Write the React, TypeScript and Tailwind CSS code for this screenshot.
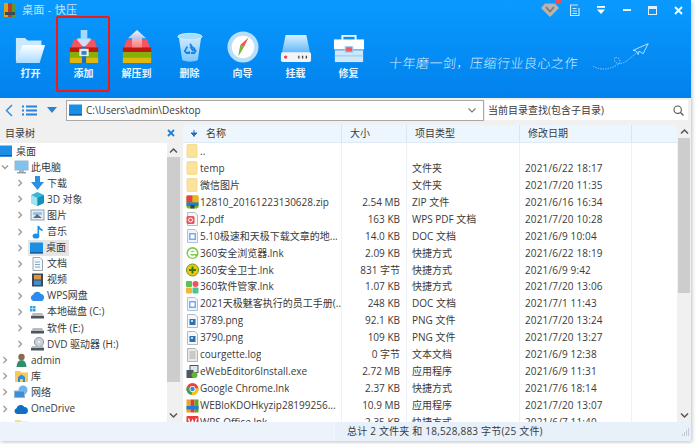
import React from "react";

const F = { fontFamily: '"Open Sans","Noto Sans CJK SC",sans-serif' };

function Archive({ up }: { up?: boolean }) {
  return (
    <svg width="30" height="33" viewBox="0 0 36 36" preserveAspectRatio="none">
      <defs>
        <linearGradient id={up ? "au" : "ad"} x1="0" y1="0" x2="0" y2="1">
          <stop offset="0" stopColor="#ffffff" stopOpacity="0.95" />
          <stop offset="1" stopColor="#ffb0b0" stopOpacity="0.5" />
        </linearGradient>
      </defs>
      <path d="M1 22 L6 10 H30 L35 22 Z" fill="#f4555f" />
      <rect x="1" y="19" width="34" height="5" fill="#c0170f" />
      <rect x="1" y="24" width="34" height="6" fill="#84b00c" />
      <rect x="1" y="30" width="34" height="6" fill="#e2b70b" />
      {up ? (
        <path d="M18 0 L29 9 H24 V19 H12 V9 H7 Z" fill={`url(#au)`} />
      ) : (
        <>
          <path d="M9 10 L18 20 L27 10 Z" fill="#f7f1f1" opacity="0.75" />
          <path d="M14 0 H22 V9 H26 L18 18 L10 9 H14 Z" fill="#bfe6ff" opacity="0.85" />
          <rect x="15.5" y="18" width="5" height="18" fill="#1d6cc4" />
          <rect x="13" y="21" width="10" height="7" fill="#d8edf5" stroke="#f4f4f4" />
          <rect x="15" y="23" width="6" height="4" fill="#3b7fb8" />
        </>
      )}
    </svg>
  );
}

function FolderOpen() {
  return (
    <svg width="31" height="26" viewBox="0 0 34 29" preserveAspectRatio="none">
      <defs>
        <linearGradient id="fo" x1="0" y1="0" x2="0" y2="1">
          <stop offset="0" stopColor="#ffffff" />
          <stop offset="1" stopColor="#a9dcff" />
        </linearGradient>
      </defs>
      <path d="M1 1 H11 L14 4 H29 V11 H9 L3 27 H1 Z" fill="#c8e9ff" />
      <path d="M8 9 H33 L27 29 H1 Z" fill="url(#fo)" />
    </svg>
  );
}

function Trash() {
  return (
    <svg width="26" height="31" viewBox="0 0 30 34" preserveAspectRatio="none">
      <defs>
        <linearGradient id="tr" x1="0" y1="0" x2="0" y2="1">
          <stop offset="0" stopColor="#cfeaff" />
          <stop offset="1" stopColor="#7cc8ff" />
        </linearGradient>
      </defs>
      <path d="M2 5 L6 31 Q15 34 24 31 L28 5 Z" fill="url(#tr)" />
      <ellipse cx="15" cy="5" rx="14" ry="3.5" fill="#a8dcff" stroke="#d4eeff" />
      <path d="M15 13 l3 4 h-2 l2 3 h3 l-2-3 M12 16 l-3 5 l2 2 h3 v-2 M16 23 h4 l2-3" fill="none" stroke="#1c82e0" strokeWidth="2" />
    </svg>
  );
}

function Compass() {
  return (
    <svg width="32" height="32" viewBox="0 0 34 34">
      <circle cx="17" cy="17" r="16.5" fill="#b7defa" />
      <circle cx="17" cy="17" r="12" fill="#ffffff" />
      <path d="M23 7 L18 17 L14 15 Z" fill="#f0555a" />
      <path d="M12 27 L14 15 L18 17 Z" fill="#7eb23a" />
    </svg>
  );
}

function Disk() {
  return (
    <svg width="32" height="29" viewBox="0 0 34 32" preserveAspectRatio="none">
      <defs>
        <linearGradient id="dk" x1="0" y1="0" x2="0" y2="1">
          <stop offset="0" stopColor="#d8f0ff" />
          <stop offset="1" stopColor="#60b8f8" />
        </linearGradient>
      </defs>
      <path d="M6 1 H28 L32 21 H2 Z" fill="url(#dk)" />
      <rect x="1" y="20" width="32" height="11" rx="2" fill="#f4f4f4" />
      <circle cx="6" cy="25.5" r="1.8" fill="#ef4050" />
      <path d="M20 24 v3 M24 24 v3 M28 24 v3" stroke="#444" strokeWidth="1.4" />
    </svg>
  );
}

function Toolbox() {
  return (
    <svg width="32" height="29" viewBox="0 0 34 32" preserveAspectRatio="none">
      <path d="M10 7 V2 H24 V7" fill="none" stroke="#fff" strokeWidth="2" />
      <path d="M1 6 H33 V17 H1 Z" fill="#ffffff" />
      <path d="M2 18 H32 V31 H2 Z" fill="#cfe8fa" />
      <rect x="2" y="23" width="30" height="2" fill="#a8d6f5" />
      <rect x="13" y="14" width="8" height="6" fill="#ef5a64" stroke="#9bd1f7" strokeWidth="1.2" />
    </svg>
  );
}

function Monitor({ w = 14, color = "#1b8fe6" }: { w?: number; color?: string }) {
  return (
    <svg width={w} height="12" viewBox="0 0 14 12" preserveAspectRatio="none" className="shrink-0">
      <rect x="0" y="0.5" width="14" height="11" fill={color} />
      <rect x="0" y="10" width="14" height="1.5" fill="#0d5fa8" />
    </svg>
  );
}

function Chevron({ open, hide }: { open?: boolean; hide?: boolean }) {
  return (
    <svg width="8" height="8" viewBox="0 0 8 8" className={hide ? "shrink-0 opacity-0" : "shrink-0"}>
      <path d={open ? "M1 2.5 L4 5.5 L7 2.5" : "M2.5 1 L5.5 4 L2.5 7"} fill="none" stroke="#999999" strokeWidth="1.3" />
    </svg>
  );
}

function TreeIcon({ k }: { k: string }) {
  const s = { width: 15, height: 14, viewBox: "0 0 15 14", className: "shrink-0" };
  switch (k) {
    case "pc":
      return (
        <svg {...s}>
          <rect x="1" y="1" width="13" height="9" fill="#7fc3ee" stroke="#9fb5c6" />
          <rect x="5" y="10" width="5" height="2" fill="#a9bac6" />
          <rect x="3" y="12" width="9" height="1.4" fill="#8b9daa" />
        </svg>
      );
    case "down":
      return (
        <svg {...s}>
          <path d="M5 0 H10 V6 H14 L7.5 14 L1 6 H5 Z" fill="#2f8fe2" />
        </svg>
      );
    case "3d":
      return (
        <svg {...s}>
          <path d="M7.5 0 L14 3 V11 L7.5 14 L1 11 V3 Z" fill="#35b7d8" />
          <path d="M1 3 L7.5 6 V14 L1 11 Z" fill="#9fe4f0" />
          <path d="M14 3 L7.5 6 V14 L14 11 Z" fill="#1590bd" />
        </svg>
      );
    case "pic":
      return (
        <svg {...s}>
          <rect x="1" y="2" width="13" height="10" fill="#e8eef4" stroke="#8ea0ae" />
          <rect x="3" y="4" width="9" height="3" fill="#9cc4e6" />
          <path d="M3 10 L7 6 L12 10 Z" fill="#5f6f7c" />
        </svg>
      );
    case "music":
      return (
        <svg {...s}>
          <ellipse cx="6" cy="11" rx="3.4" ry="2.6" fill="#1e8fe6" />
          <path d="M8.3 11 V1 Q9 4 12.5 5.5" fill="none" stroke="#1e8fe6" strokeWidth="1.6" />
        </svg>
      );
    case "desk":
      return <Monitor w={13} />;
    case "doc":
      return (
        <svg {...s}>
          <path d="M3 0.5 H10 L12.5 3 V13.5 H3 Z" fill="#f6f6f6" stroke="#9aa5ad" />
          <path d="M5 5 H10 M5 7.5 H10 M5 10 H10" stroke="#6ea9d8" />
        </svg>
      );
    case "video":
      return (
        <svg {...s}>
          <rect x="2" y="0.5" width="11" height="13" fill="#3d4a55" />
          <rect x="4" y="2" width="7" height="4.5" fill="#e0953a" />
          <rect x="4" y="7.5" width="7" height="4.5" fill="#3f8fd0" />
        </svg>
      );
    case "cloud":
      return (
        <svg {...s}>
          <path d="M3.5 12 A3.2 3.2 0 0 1 3 5.8 A4.4 4.4 0 0 1 11 5 A3.6 3.6 0 0 1 11.5 12 Z" fill="#2b8cf0" />
        </svg>
      );
    case "c":
      return (
        <svg {...s}>
          <rect x="0" y="1" width="2.5" height="2.5" fill="#2aa5ee" />
          <rect x="3" y="1" width="2.5" height="2.5" fill="#2aa5ee" />
          <rect x="0" y="4" width="2.5" height="2.5" fill="#2aa5ee" />
          <rect x="3" y="4" width="2.5" height="2.5" fill="#2aa5ee" />
          <path d="M3 8 H12 L14 11 H1 Z" fill="#b5bdc3" />
          <rect x="1" y="11" width="13" height="2.5" fill="#4d555a" />
        </svg>
      );
    case "e":
      return (
        <svg {...s}>
          <path d="M3 7 H12 L14 10 H1 Z" fill="#b5bdc3" />
          <rect x="1" y="10" width="13" height="2.5" fill="#4d555a" />
        </svg>
      );
    case "dvd":
      return (
        <svg {...s}>
          <circle cx="9" cy="5" r="4.6" fill="#c9cfd4" stroke="#8f989f" />
          <circle cx="9" cy="5" r="1.3" fill="#eee" />
          <path d="M2 9 H13 L14 11 H1 Z" fill="#b5bdc3" />
          <rect x="1" y="11" width="13" height="2.5" fill="#4d555a" />
        </svg>
      );
    case "user":
      return (
        <svg {...s}>
          <circle cx="7.5" cy="4" r="3.2" fill="#8a6a4e" />
          <path d="M2.5 14 Q3 7 7.5 7 Q12 7 12.5 14 Z" fill="#2f8f6a" />
        </svg>
      );
    case "lib":
      return (
        <svg {...s}>
          <path d="M1 2 H6 L7.5 3.5 H14 V13 H1 Z" fill="#f6c95a" />
          <path d="M4 13 V8 L7.5 5.5 L11 8 V13 H9 V10 H6 V13 Z" fill="#2b8fe0" />
        </svg>
      );
    case "net":
      return (
        <svg {...s}>
          <circle cx="9" cy="5" r="4.5" fill="#6fb4e8" />
          <rect x="0.5" y="6" width="10" height="6.5" fill="#3c8fd6" stroke="#8db5d4" />
        </svg>
      );
    case "od":
      return (
        <svg {...s}>
          <path d="M3 12 A3 3 0 0 1 2.5 6.2 A4.4 4.4 0 0 1 10.5 5 A3.6 3.6 0 0 1 11.5 12 Z" fill="#0f6fc6" />
        </svg>
      );
    default:
      return (
        <svg {...s}>
          <path d="M1 2 H6 L7.5 3.5 H14 V13 H1 Z" fill="#f8dc8c" />
        </svg>
      );
  }
}

function FileIcon({ k }: { k: string }) {
  const s = { width: 13, height: 14, viewBox: "0 0 13 14", className: "shrink-0" };
  const Page = (
    <path d="M1.5 0.5 H9 L11.5 3 V13.5 H1.5 Z" fill="#f5f6f7" stroke="#b3bac0" />
  );
  switch (k) {
    case "folder":
      return (
        <svg {...s}>
          <rect x="1" y="0.5" width="10" height="13" rx="1" fill="#fbe39c" stroke="#efd27c" strokeWidth="0.7" />
        </svg>
      );
    case "zip":
      return (
        <svg {...s}>
          <rect x="0.5" y="0.5" width="12" height="13" rx="2" fill="#7ab51d" />
          <rect x="0.5" y="0.5" width="6" height="7" fill="#e64040" />
          <rect x="6.5" y="0.5" width="6" height="7" fill="#f0b020" />
          <rect x="0.5" y="7.5" width="12" height="3.5" fill="#1f7fd8" />
          <rect x="4.5" y="10" width="4" height="3.5" fill="#39424a" />
        </svg>
      );
    case "pdf":
      return (
        <svg {...s}>
          {Page}
          <rect x="0.5" y="4" width="8" height="8" rx="1.5" fill="#e8545f" />
          <circle cx="4.5" cy="8" r="2" fill="none" stroke="#fff" />
        </svg>
      );
    case "doc":
      return (
        <svg {...s}>
          <path d="M1.5 0.5 H9 L11.5 3 V13.5 H1.5 Z" fill="#eef4fc" stroke="#a9c3e8" />
          <rect x="3" y="4" width="7" height="7" fill="#7fa9e8" />
          <rect x="4.5" y="5.5" width="4" height="4" fill="#fff" />
        </svg>
      );
    case "ie":
      return (
        <svg {...s}>
          <circle cx="6.5" cy="7" r="6" fill="#7ecb4a" />
          <path d="M3.5 7 H10 A3.5 3.5 0 1 0 9 9.8" fill="none" stroke="#fff" strokeWidth="2" />
        </svg>
      );
    case "guard":
      return (
        <svg {...s}>
          <circle cx="6.5" cy="7" r="6" fill="#f5c60f" stroke="#5a9a1e" />
          <path d="M3 7 H10 M6.5 3.5 V10.5" stroke="#2c7d1a" strokeWidth="2" />
        </svg>
      );
    case "mgr":
      return (
        <svg {...s}>
          <rect x="0" y="1" width="6" height="6" rx="1" fill="#5cc24c" />
          <rect x="6.5" y="1" width="6" height="6" rx="3" fill="#e8545f" />
          <rect x="0" y="7.5" width="6" height="6" rx="1" fill="#f6b23c" />
          <rect x="6.5" y="7.5" width="6" height="6" rx="1" fill="#4cc48c" />
        </svg>
      );
    case "png":
      return (
        <svg {...s}>
          {Page}
          <rect x="3.5" y="5" width="6" height="6" fill="#2f6fb4" />
          <rect x="5" y="6" width="2" height="2" fill="#bcdcf4" />
        </svg>
      );
    case "log":
      return (
        <svg {...s}>
          <path d="M1.5 0.5 H9 L11.5 3 V13.5 H1.5 Z" fill="#e9e9e9" stroke="#b5b5b5" />
          <path d="M3.5 4 H9.5 M3.5 6 H9.5 M3.5 8 H9.5 M3.5 10 H9.5" stroke="#a8a8a8" />
        </svg>
      );
    case "exe":
      return (
        <svg {...s}>
          <rect x="4" y="0.5" width="8" height="7" fill="#dde4ea" stroke="#4d5860" />
          <rect x="0.5" y="5" width="7" height="8" fill="#4d5860" />
          <circle cx="8.5" cy="10" r="3" fill="#62b33a" />
        </svg>
      );
    case "chrome":
      return (
        <svg {...s} viewBox="0 0 14 14">
          <circle cx="7" cy="7" r="6.5" fill="#e8483a" />
          <path d="M7 7 L1 4.5 A6.5 6.5 0 0 0 6 13.4 Z" fill="#3aa655" />
          <path d="M7 7 L13.4 5.8 A6.5 6.5 0 0 1 6 13.4 Z" fill="#f5c518" />
          <circle cx="7" cy="7" r="3.2" fill="#fff" />
          <circle cx="7" cy="7" r="2.4" fill="#3f86e8" />
        </svg>
      );
    case "rar":
      return (
        <svg {...s}>
          <rect x="0.5" y="0.5" width="4" height="13" fill="#e8a81c" />
          <rect x="4.5" y="0.5" width="4" height="13" fill="#e03c3c" />
          <rect x="8.5" y="0.5" width="4" height="13" fill="#62a81c" />
          <rect x="0.5" y="7" width="12" height="3.5" fill="#1f7fd8" />
        </svg>
      );
    case "wps":
      return (
        <svg {...s}>
          <rect x="0.5" y="1" width="12" height="12" rx="1" fill="#ea3c3c" />
          <path d="M2.5 3.5 L4.5 10 L6.5 5.5 L8.5 10 L10.5 3.5" fill="none" stroke="#fff" strokeWidth="1.4" />
        </svg>
      );
    default:
      return null;
  }
}

const TOOLS: [string, React.ReactNode][] = [
  ["打开", <FolderOpen />],
  ["添加", <Archive />],
  ["解压到", <Archive up />],
  ["删除", <Trash />],
  ["向导", <Compass />],
  ["挂载", <Disk />],
  ["修复", <Toolbox />],
];

const TREE: [string, string, number, boolean?][] = [
  ["桌面", "desk0", 0],
  ["此电脑", "pc", 1, true],
  ["下载", "down", 2],
  ["3D 对象", "3d", 2],
  ["图片", "pic", 2],
  ["音乐", "music", 2],
  ["桌面", "desk", 2],
  ["文档", "doc", 2],
  ["视频", "video", 2],
  ["WPS网盘", "cloud", 2],
  ["本地磁盘 (C:)", "c", 2],
  ["软件 (E:)", "e", 2],
  ["DVD 驱动器 (H:)", "dvd", 2],
  ["admin", "user", 1],
  ["库", "lib", 1],
  ["网络", "net", 1],
  ["OneDrive", "od", 1],
  ["", "folder", 1],
];

const FILES: [string, string, string, string, string][] = [
  ["folder", "..", "", "", ""],
  ["folder", "temp", "", "文件夹", "2021/6/22 18:17"],
  ["folder", "微信图片", "", "文件夹", "2021/7/20 11:35"],
  ["zip", "12810_20161223130628.zip", "2.54 MB", "ZIP 文件", "2021/6/16 16:34"],
  ["pdf", "2.pdf", "163 KB", "WPS PDF 文档", "2021/7/20 10:28"],
  ["doc", "5.10极速和天极下载文章的地...", "14.0 KB", "DOC 文档", "2021/6/9 10:04"],
  ["ie", "360安全浏览器.lnk", "2.09 KB", "快捷方式", "2021/6/22 18:19"],
  ["guard", "360安全卫士.lnk", "831 字节", "快捷方式", "2021/6/9 9:42"],
  ["mgr", "360软件管家.lnk", "1.07 KB", "快捷方式", "2021/7/20 13:06"],
  ["doc", "2021天极魅客执行的员工手册(...", "248 KB", "DOC 文档", "2021/7/1 11:43"],
  ["png", "3789.png", "92.1 KB", "PNG 文件", "2021/7/20 13:24"],
  ["png", "3790.png", "109 KB", "PNG 文件", "2021/7/20 13:27"],
  ["log", "courgette.log", "0 字节", "文本文档", "2021/6/9 12:38"],
  ["exe", "eWebEditor6Install.exe", "2.72 MB", "应用程序", "2021/6/9 11:31"],
  ["chrome", "Google Chrome.lnk", "2.37 KB", "快捷方式", "2021/7/6 18:14"],
  ["rar", "WEBloKDOHkyzip28199256...", "10.9 MB", "应用程序", "2021/7/20 13:07"],
  ["wps", "WPS Office.lnk", "2.35 KB", "快捷方式", "2021/6/7 11:40"],
];

function ScrollUp() {
  return (
    <svg width="9" height="7" viewBox="0 0 9 7">
      <path d="M1 5.5 L4.5 2 L8 5.5" fill="none" stroke="#555" strokeWidth="1.5" />
    </svg>
  );
}
function ScrollDown() {
  return (
    <svg width="9" height="7" viewBox="0 0 9 7">
      <path d="M1 1.5 L4.5 5 L8 1.5" fill="none" stroke="#555" strokeWidth="1.5" />
    </svg>
  );
}

export default function App() {
  return (
    <div className="w-[700px] h-[444px] bg-white overflow-hidden" style={F}>
      <div className="w-[691px] h-[441px] flex flex-col shadow-[1px_1px_4px_rgba(0,0,0,0.25)]">
        {/* Blue header */}
        <div className="h-[98px] shrink-0 bg-gradient-to-b from-[#0a9aff] to-[#0281ed] flex flex-col">
          <div className="h-[20px] flex items-center pl-[4px] pr-[8px] shrink-0">
            <svg width="12" height="14" viewBox="0 0 12 14" className="shrink-0">
              <rect x="0" y="0" width="4" height="14" fill="#d9a21c" />
              <rect x="4" y="0" width="4" height="14" fill="#c0392b" />
              <rect x="8" y="0" width="4" height="14" fill="#5a9a2c" />
              <rect x="1" y="9" width="10" height="3" fill="#3c4852" />
            </svg>
            <span className="ml-[6px] text-[11px] text-[#c6e4fb] tracking-[0.3px]">桌面 - 快压</span>
            <div className="ml-auto flex items-center">
              <div className="relative w-[18px] h-[14px] mr-[11px]">
                <svg width="18" height="14" viewBox="0 0 18 14">
                  <path d="M4 0.5 H14 L18 5 L9 14 L0 5 Z" fill="#b9b4ae" />
                  <path d="M5 4 L9 8.5 L13 4" fill="none" stroke="#7b7672" strokeWidth="1.6" />
                </svg>
                <span className="absolute -top-[5px] -right-[2px] w-[6px] h-[6px] rounded-full bg-[#f4504c]" />
              </div>
              <svg width="11" height="12" viewBox="0 0 11 12" className="mr-[16px]">
                <path d="M9 4 V11.5 H0.5 V1 H8 M2.5 4.5 H6.5 M2.5 7 H7 M2.5 9.5 H7" fill="none" stroke="#cfe8fb" strokeWidth="1.2" />
              </svg>
              <svg width="8" height="8" viewBox="0 0 11 9" preserveAspectRatio="none" className="mr-[18px]">
                <rect x="0" y="0" width="11" height="2" fill="#fff" />
                <path d="M0 4 H11 L5.5 9 Z" fill="#fff" />
              </svg>
              <div className="w-[8px] h-[2px] bg-[#e8f5ff] mr-[17px]" />
              <div className="w-[9px] h-[9px] border-[1.5px] border-t-[3px] border-[#dff1ff] mr-[17px]" />
              <svg width="9" height="9" viewBox="0 0 9 9">
                <path d="M1 1 L8 8 M8 1 L1 8" stroke="#fff" strokeWidth="1.8" />
              </svg>
            </div>
          </div>
          <div className="flex pl-[4px] items-start">
            {TOOLS.map(([label, icon], i) => (
              <div key={label} className="relative w-[53px] h-[76px] -mt-[4px] flex flex-col items-center">
                <div className="h-[36px] mt-[11px] flex items-end justify-center">{icon}</div>
                <div className="mt-[2px] text-[10px] leading-[16px] font-semibold text-[#e8f5ff]">{label}</div>
                {i === 1 && (
                  <div className="absolute -left-[1px] top-0 w-[54px] h-[76px] border-[2px] border-[#f01a14] rounded-[2px]" />
                )}
              </div>
            ))}
            <div className="ml-auto mr-[113px] mt-[33px] flex items-center relative">
              <span className="text-[13px] font-light tracking-[0.5px] text-[#d5ecff] -skew-x-6 whitespace-nowrap" style={{ fontFamily: '"Noto Sans CJK SC",sans-serif' }}>
                十年磨一剑，压缩行业良心之作
              </span>
              <svg width="70" height="30" viewBox="0 0 70 36" className="absolute left-[195px] -top-[11px]">
                <path d="M4 29 Q16 36 30 29 Q40 24 34 19 Q28 17 30 23 Q34 29 44 23 L56 13" fill="none" stroke="#cfe9ff" strokeWidth="0.9" strokeDasharray="1.5 1.5" />
                <path d="M52 10 L70 2 L64 14 L59 11 L58 15 L56 11 Z" fill="none" stroke="#d8eeff" strokeWidth="1" />
              </svg>
            </div>
          </div>
        </div>

        {/* Address row */}
        <div className="h-[24px] shrink-0 bg-[#f0f0f0] flex items-center pl-[5px] pr-[3px]">
          <svg width="8" height="13" viewBox="0 0 8 13" className="mr-[9px] shrink-0">
            <path d="M7 1 L1.5 6.5 L7 12" fill="none" stroke="#2f8fe0" strokeWidth="1.5" />
          </svg>
          <svg width="15" height="11" viewBox="0 0 15 11" className="mr-[10px] shrink-0">
            <path d="M0 1.5 H2 M0 5.5 H2 M0 9.5 H2 M4 1.5 H15 M4 5.5 H15 M4 9.5 H15" stroke="#2a82d6" strokeWidth="2" />
          </svg>
          <svg width="10" height="6" viewBox="0 0 10 6" className="mr-[9px] shrink-0">
            <path d="M0 0 H10 L5 6 Z" fill="#2a82d6" />
          </svg>
          <div className="w-[418px] h-[21px] border border-[#a8a8a8] bg-white flex items-center pl-[2px] pr-[7px] shrink-0">
            <Monitor w={13} />
            <span className="ml-[4px] text-[10px] text-[#3a3a3a]">C:\Users\admin\Desktop</span>
            <svg width="8" height="5" viewBox="0 0 8 5" className="ml-auto">
              <path d="M0.5 0.5 L4 4 L7.5 0.5" fill="none" stroke="#777" strokeWidth="1.1" />
            </svg>
          </div>
          <div className="ml-[1px] flex-1 h-[20px] bg-white flex items-center pl-[3px] pr-[4px]">
            <span className="text-[10px] text-[#3a3a3a]">当前目录查找(包含子目录)</span>
            <svg width="11" height="11" viewBox="0 0 11 11" className="ml-auto">
              <circle cx="4.7" cy="4.7" r="3.7" fill="none" stroke="#555" strokeWidth="1.1" />
              <path d="M7.5 7.5 L10.5 10.5" stroke="#555" strokeWidth="1.3" />
            </svg>
          </div>
        </div>

        {/* Main area */}
        <div className="flex-1 min-h-0 flex bg-[#f0f0f0]">
          {/* Tree panel */}
          <div className="w-[180px] shrink-0 flex flex-col">
            <div className="h-[21px] shrink-0 flex items-center justify-between pl-[5px] pr-[5px] pt-[1px]">
              <span className="text-[10px] text-[#3a3a3a]">目录树</span>
              <svg width="8" height="8" viewBox="0 0 8 8">
                <path d="M1 1 L7 7 M7 1 L1 7" stroke="#1f7fd4" strokeWidth="1.8" />
              </svg>
            </div>
            <div className="flex-1 min-h-0 flex bg-white">
              <div className="flex-1 min-w-0 overflow-hidden">
                {TREE.map(([label, icon, lvl, open], i) => (
                  <div key={i} className="h-[16.1px] flex items-center">
                    {lvl === 0 && (
                      <>
                        <div className="w-[12px] overflow-hidden flex justify-end shrink-0">
                          <Monitor w={14} />
                        </div>
                        <span className="ml-[4px] text-[10px] text-[#3a3a3a] whitespace-nowrap">{label}</span>
                      </>
                    )}
                    {lvl === 1 && (
                      <>
                        <div className="ml-[1px] shrink-0 flex"><Chevron open={open} /></div>
                        <div className="ml-[5px] shrink-0 flex"><TreeIcon k={icon} /></div>
                        <span className="ml-[2px] text-[10px] text-[#3a3a3a] whitespace-nowrap">{label}</span>
                      </>
                    )}
                    {lvl === 2 && (
                      <>
                        <div className="ml-[16px] shrink-0 flex"><Chevron /></div>
                        <div className={icon === "desk" ? "ml-[4px] flex items-center gap-[3px] bg-[#e5e5e5] pl-[2px] pr-[3px] h-[16px]" : "ml-[6px] flex items-center gap-[2px]"}>
                          <TreeIcon k={icon} />
                          <span className="text-[10px] text-[#3a3a3a] whitespace-nowrap">{label}</span>
                        </div>
                      </>
                    )}
                  </div>
                ))}
              </div>
              <div className="w-[13px] shrink-0 bg-[#f0f0f0] flex flex-col items-center">
                <div className="h-[14px] flex items-center"><ScrollUp /></div>
                <div className="w-full h-[225px] bg-[#cdcdcd]" />
                <div className="mt-auto h-[14px] flex items-center"><ScrollDown /></div>
              </div>
            </div>
          </div>

          {/* File list */}
          <div className="flex-1 min-w-0 ml-[3px] flex flex-col pt-[3px]">
            <div className="flex-1 min-h-0 flex">
              <div className="flex-1 min-w-0 bg-white flex flex-col overflow-hidden">
                <div className="h-[18px] shrink-0 bg-[#eef6fd] border-b border-[#dfeaf5] flex text-[10px] text-[#3a3a3a]">
                  <div className="w-[159px] flex items-center pl-[8px] border-r border-[#d9e6f2]">
                    <svg width="6" height="7" viewBox="0 0 6 7">
                      <path d="M3 0 V7 M0 3 L3 6 L6 3 Z" fill="#2a6fb0" stroke="#2a6fb0" />
                    </svg>
                    <span className="ml-[9px]">名称</span>
                  </div>
                  <div className="w-[65px] flex items-center pl-[8px] border-r border-[#d9e6f2]">大小</div>
                  <div className="w-[113px] flex items-center pl-[8px] border-r border-[#d9e6f2]">项目类型</div>
                  <div className="w-[112px] flex items-center pl-[8px] border-r border-[#d9e6f2]">修改日期</div>
                </div>
                <div className="flex-1 min-h-0 overflow-hidden">
                  {FILES.map(([icon, name, size, type, date], i) => (
                    <div key={i} className="h-[16.95px] flex items-center text-[10px] text-[#3a3a3a] whitespace-nowrap">
                      <div className="w-[159px] flex items-center pl-[3px] border-r border-[#edf2f8] h-full">
                        <FileIcon k={icon} />
                        <span className="ml-[1px] overflow-hidden">{name}</span>
                      </div>
                      <div className="w-[65px] pr-[6px] border-r border-[#edf2f8] h-full flex items-center justify-end">{size}</div>
                      <div className="w-[113px] pl-[5px] border-r border-[#edf2f8] h-full flex items-center">{type}</div>
                      <div className="w-[112px] pl-[5px] border-r border-[#edf2f8] h-full flex items-center tracking-[0.15px]">{date}</div>
                    </div>
                  ))}
                </div>
              </div>
              <div className="w-[14px] shrink-0 bg-[#f0f0f0] flex flex-col items-center">
                <div className="h-[13px] flex items-center"><ScrollUp /></div>
                <div className="w-[12px] h-[155px] bg-[#cdcdcd]" />
                <div className="mt-auto h-[14px] flex items-center"><ScrollDown /></div>
              </div>
            </div>
          </div>
        </div>

        {/* Status bar */}
        <div className="h-[19px] shrink-0 bg-[#e8f0f9] flex items-center">
          <div className="w-[335px] h-full bg-[#ecf3fa] border-r border-[#f2f6fb]" />
          <span className="ml-[12px] text-[10px] tracking-[0.2px] text-[#3a3a3a] whitespace-nowrap">总计 2 文件夹 和 18,528,883 字节(25 文件)</span>
          <svg width="8" height="8" viewBox="0 0 8 8" className="ml-auto mr-[1px]">
            <path d="M6 1 h1 M4 3 h1 M6 3 h1 M2 5 h1 M4 5 h1 M6 5 h1 M0 7 h1 M2 7 h1 M4 7 h1 M6 7 h1" stroke="#9aa5ad" />
          </svg>
        </div>
      </div>
    </div>
  );
}
